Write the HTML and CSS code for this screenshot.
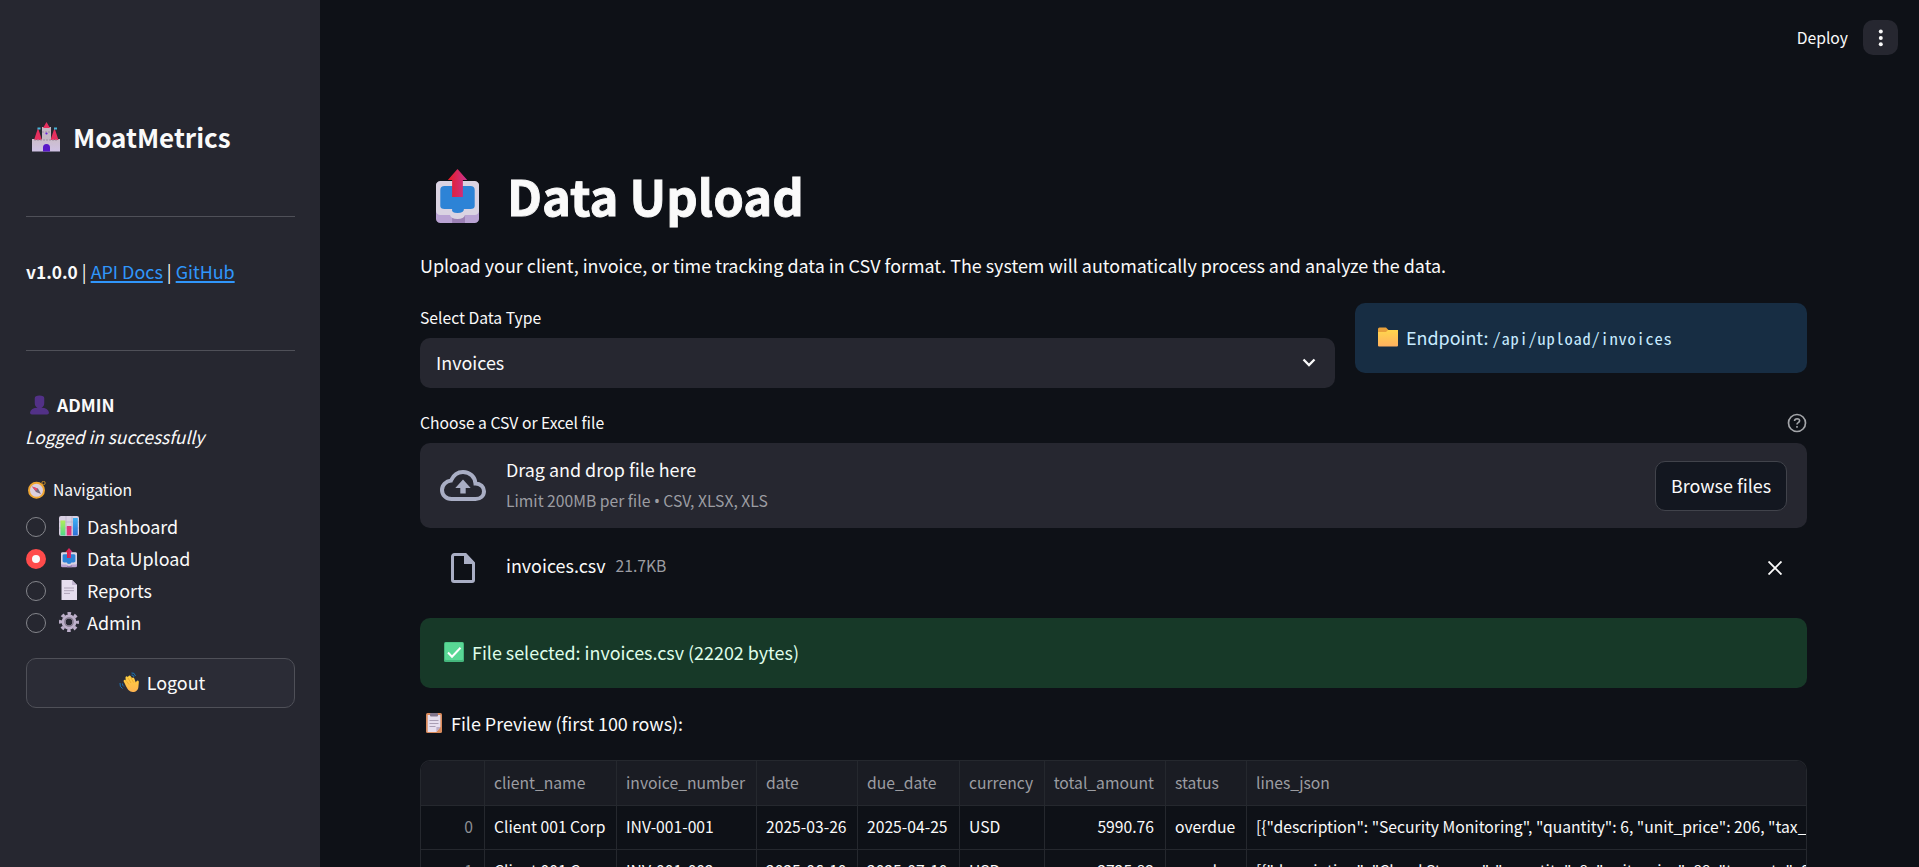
FILE: index.html
```html
<!DOCTYPE html>
<html lang="en">
<head>
<meta charset="utf-8">
<title>MoatMetrics</title>
<link rel="stylesheet" href="styles.css">
</head>
<body>
<svg class="defs" width="0" height="0" aria-hidden="true">
  <defs>
    <linearGradient id="arrow" x1="0" x2="1" y1="0" y2="0"><stop offset="0" stop-color="#e81c24"/><stop offset="1" stop-color="#c93391"/></linearGradient>
    <linearGradient id="lilac" x1="0" x2="0" y1="0" y2="1"><stop offset="0" stop-color="#cbbdc9"/><stop offset="1" stop-color="#cfc1e4"/></linearGradient>
    <linearGradient id="folder" x1="0" x2="0" y1="0" y2="1"><stop offset="0" stop-color="#ffd64d"/><stop offset="1" stop-color="#ffb160"/></linearGradient>
    <linearGradient id="hand" x1="0" x2="0" y1="0" y2="1"><stop offset="0" stop-color="#ffd23e"/><stop offset="1" stop-color="#fdb350"/></linearGradient>
    <linearGradient id="green" x1="0" x2="0" y1="0" y2="1"><stop offset="0" stop-color="#b2ee5a"/><stop offset="1" stop-color="#4fd88a"/></linearGradient>
    <linearGradient id="blue" x1="0" x2="0" y1="0" y2="1"><stop offset="0" stop-color="#3fb2f5"/><stop offset="1" stop-color="#2e6fd6"/></linearGradient>
    <symbol id="outbox" viewBox="0 0 40 54" preserveAspectRatio="none">
      <rect y="13" width="40" height="41" rx="4" fill="#b9a3d3"/>
      <path d="M15 46h12v8H15z" fill="#9b80b4"/>
      <path d="M4 12h32a4 4 0 0 1 4 4v26a4 4 0 0 1-4 4h-9q-1 4-7 4t-7-4H4a4 4 0 0 1-4-4V16a4 4 0 0 1 4-4z" fill="#dad3e2"/>
      <path d="M8 17h24q4 0 4 4v16q0 3-4 3h-6q0 4-6 4t-5-4H8q-4 0-4-3V21q0-4 4-4z" fill="#2d83d6"/>
      <path d="M20 0l9 11h-4v17H15V11h-4z" fill="url(#arrow)"/>
    </symbol>
  </defs>
</svg>
<div class="app">
  <aside class="sidebar">
    <h2 class="brand">
      <svg class="brand-icon" viewBox="0 0 28 30"><path d="M0 17h28v12.500H0z" fill="url(#lilac)"/><path d="M10 5h9v13h-9zM3 16h5v3H3zM20 16h5v3h-5z" fill="#c5b8c4"/><path d="M14.500 0l3.500 6h-7zM6 6l4 12H2zM22.500 6l4 12h-8z" fill="#e62f5e"/><path d="M5.500 5.500h3v2h-3zM22 5.500h3v2h-3z" fill="#45b5d8"/><path d="M10 10h9M2 18h24" stroke="#a08fa5" stroke-dasharray="2 1"/><circle cx="14.500" cy="11.500" r="1.100" fill="#6a1de0"/><path d="M11 29.500v-4a3.500 3.500 0 0 1 7 0v4z" fill="#5a18c8"/></svg>
      <span>MoatMetrics</span>
    </h2>
    <hr class="rule">
    <p class="version"><b>v1.0.0</b> | <a href="#">API Docs</a> | <a href="#">GitHub</a></p>
    <hr class="rule">
    <div class="user">
      <p class="user-name"><svg class="user-icon" viewBox="0 0 20 20"><path d="M5 3q0-3 5-3t5 3v5q0 4-3 5 7 0 8 5 0 2-2 2H2q-2 0-2-2 1-5 8-5-3-1-3-5z" fill="#523187"/></svg><b>ADMIN</b></p>
      <p class="user-status">Logged in successfully</p>
    </div>
    <p class="nav-title"><svg class="compass" viewBox="0 0 18 18"><circle cx="15.500" cy="2" r="1.700" fill="none" stroke="#c58a26"/><circle cx="8.500" cy="9.300" r="7.500" fill="#dcd0df" stroke="#efa633" stroke-width="2"/><path d="M4 5.500l6 2 3 5.500-5-2z" fill="#73687c"/><path d="M4 5.500l5.500 2-1.500 2.500z" fill="#ef476b"/></svg>Navigation</p>
    <nav class="nav">
      <label class="option"><i class="radio"></i><svg class="emoji" viewBox="0 0 20 20"><rect width="20" height="20" rx="2" fill="#d8cfe2"/><path d="M0 6h20M0 12h20M7 0v20M13 0v20" stroke="#b9acc6" stroke-width=".7"/><rect x="1.500" y="4.500" width="4.800" height="15" fill="url(#green)"/><rect x="7.800" y="10" width="4.600" height="9.500" fill="#e0357b"/><rect x="14" y="2" width="4.800" height="17.500" fill="url(#blue)"/></svg>Dashboard</label>
      <label class="option"><i class="radio radio-on"></i><svg class="emoji" viewBox="0 0 20 20"><use href="#outbox" x="2" y="0" width="16" height="19.500"/></svg>Data Upload</label>
      <label class="option"><i class="radio"></i><svg class="emoji" viewBox="0 0 20 20"><path d="M2.500 0H13l5 5v15H2.500z" fill="#e6ddee"/><path d="M13 0l5 5h-5z" fill="#c4b7d2"/><path d="M5 8h10M5 10.700h10M5 13.400h6" stroke="#afa3b8"/></svg>Reports</label>
      <label class="option"><i class="radio"></i><svg class="emoji" viewBox="0 0 20 20"><circle cx="10" cy="10" r="5.400" fill="none" stroke="#bdb0ca" stroke-width="4"/><circle cx="10" cy="10" r="8.500" fill="none" stroke="#bdb0ca" stroke-width="3" stroke-dasharray="3.500 3.176" stroke-dashoffset="1.750"/><circle cx="10" cy="10" r="4.200" fill="none" stroke="#80778a" stroke-width="1.200"/></svg>Admin</label>
    </nav>
    <button class="button logout"><svg class="emoji wave" viewBox="0 0 20 20"><path d="M12.500 1q3-.8 4 3M12.500 3q2-.3 2.500 2M1 11q-.5 4 2.500 5.500M3.400 11.500q0 2 1.500 3" fill="none" stroke="#1976b8" stroke-width="1"/><path d="M6 12L4.500 9q1-2 2.200-.5L6.500 5q1.300-1.500 2.400.2L9.500 4q1.500-1.300 2.500.7l1 1.300q1.500-1 2.300.6l1.500 4q1.200-2.800 2.500-1.800c1 .7.300 3 .2 5.200C19.400 18 17 20 13.800 20S8 17 6 12z" fill="url(#hand)"/><path d="M7 8.500l3 4M9 6l3 5M12 5.500l2.600 5" stroke="#e59a27" stroke-width=".6"/></svg>Logout</button>
  </aside>
  <main class="main">
    <header class="topbar">
      <span class="deploy">Deploy</span>
      <button class="menu"><svg width="20" height="20" viewBox="0 0 20 20" fill="#fafafa"><circle cx="9.800" cy="3.600" r="2"/><circle cx="9.800" cy="9.900" r="2"/><circle cx="9.800" cy="16.200" r="2"/></svg></button>
    </header>
    <div class="content">
      <h1 class="title"><svg class="title-icon" viewBox="0 0 43 54"><use href="#outbox" width="43" height="54"/></svg><span>Data Upload</span></h1>
      <p class="intro">Upload your client, invoice, or time tracking data in CSV format. The system will automatically process and analyze the data.</p>
      <div class="type-row">
        <div class="field">
          <div class="label">Select Data Type</div>
          <div class="select"><span>Invoices</span><svg class="chevron" viewBox="0 0 14 9"><path d="M1.500 1.500L7 7l5.500-5.500" fill="none" stroke="#fafafa" stroke-width="2.300"/></svg></div>
        </div>
        <div class="alert info"><svg class="emoji" viewBox="0 0 20 20"><path d="M0 2Q0 .5 1.500.5H8l2.500 2.500H20v7H0z" fill="#e9a13b"/><path d="M0 5h8l2-2h10v15.500q0 1-1 1H1q-1 0-1-1z" fill="url(#folder)"/></svg><span>Endpoint: <code>/api/upload/invoices</code></span></div>
      </div>
      <div class="upload">
        <div class="label upload-label"><span>Choose a CSV or Excel file</span><svg class="help" viewBox="0 0 20 20" fill="none" stroke="#a3a5a9"><circle cx="10" cy="10" r="8.500" stroke-width="1.700"/><path d="M7.500 8q.2-2.300 2.600-2.300 2.500.1 2.500 2.100 0 1.200-1.300 1.800-1.300.7-1.300 1.900M10 13v1.700" stroke-width="1.600"/></svg></div>
        <div class="dropzone">
          <svg class="cloud" viewBox="0 0 46 31"><path d="M11.500 29C6 29 2 25 2 20c0-5 4-9 9-9.500C13.500 5 18 2 23 2c7 0 12 5 12.500 11.500 5 0 8.500 3.500 8.500 7.700 0 4.500-3.500 7.800-8.500 7.800z" fill="none" stroke="#a9aec4" stroke-width="4"/><path d="M23 9.500l7.700 8.500h-5v5.500h-5.400V18h-5z" fill="#a9aec4"/></svg>
          <div class="drop-text"><div>Drag and drop file here</div><div class="hint">Limit 200MB per file <span class="bullet">•</span> CSV, XLSX, XLS</div></div>
          <button class="button browse">Browse files</button>
        </div>
        <div class="file">
          <svg class="file-icon" viewBox="0 0 24 30"><path d="M3.500 1.500h11L22.500 10v17a1.500 1.500 0 0 1-1.500 1.500H3a1.500 1.500 0 0 1-1.500-1.500V3.500a2 2 0 0 1 2-2z" fill="none" stroke="#a9aec4" stroke-width="3"/><path d="M13 1h2l8 8v2H13z" fill="#a9aec4"/></svg>
          <span class="file-name">invoices.csv</span><span class="hint file-size">21.7KB</span>
          <svg class="close" viewBox="0 0 14 14"><path d="M.5.5l13 13M13.500.5l-13 13" stroke="#fafafa" stroke-width="1.900"/></svg>
        </div>
      </div>
      <div class="alert success"><svg class="emoji" viewBox="0 0 20 20"><rect width="20" height="20" rx="1.500" fill="#45b77d"/><rect x="1" y=".5" width="18" height="17.500" rx="1" fill="#59d895"/><path d="M4 10.500l4 4.200 8.500-9" fill="none" stroke="#fff" stroke-width="2"/></svg><span>File selected: invoices.csv (22202 bytes)</span></div>
      <p class="preview"><svg class="clip" viewBox="0 0 16 20"><rect width="16" height="20" rx="1.500" fill="#d98b5c"/><path d="M1.700 2h12.700v12l-4 5H1.700z" fill="#e6deee"/><path d="M14.400 14l-4 5v-5z" fill="#bdaec9"/><rect x="4" width="8" height="3.500" rx="1" fill="#81768d"/><path d="M3.500 7.500h9M3.500 10.500h9M3.500 13.500h6" stroke="#a99eb4"/></svg>File Preview (first 100 rows):</p>
      <div class="grid">
        <div class="cell head"></div><div class="cell head">client_name</div><div class="cell head">invoice_number</div><div class="cell head">date</div><div class="cell head">due_date</div><div class="cell head">currency</div><div class="cell head num">total_amount</div><div class="cell head">status</div><div class="cell head">lines_json</div>
        <div class="cell num index">0</div><div class="cell">Client 001 Corp</div><div class="cell">INV-001-001</div><div class="cell">2025-03-26</div><div class="cell">2025-04-25</div><div class="cell">USD</div><div class="cell num">5990.76</div><div class="cell">overdue</div><div class="cell">[{"description": "Security Monitoring", "quantity": 6, "unit_price": 206, "tax_</div>
        <div class="cell num index">1</div><div class="cell">Client 001 Corp</div><div class="cell">INV-001-002</div><div class="cell">2025-06-10</div><div class="cell">2025-07-10</div><div class="cell">USD</div><div class="cell num">2725.83</div><div class="cell">overdue</div><div class="cell">[{"description": "Cloud Storage", "quantity": 8, "unit_price": 88, "tax_rate": 0.1}]</div>
      </div>
    </div>
  </main>
</div>
</body>
</html>
```
FILE: styles.css
```css
* { box-sizing: border-box; }
body {
  margin: 0;
  overflow: hidden;
  background: #0e1117;
  color: #fafafa;
  font: 17.920px/32px "Noto Sans CJK SC", "Noto Sans", sans-serif;
}
p, h1, h2 { margin: 0; }
svg { display: block; flex: none; }
.defs { position: absolute; }
.app { display: flex; width: 1919px; height: 867px; }

.sidebar { width: 320px; flex: none; padding: 112px 25px 0 26px; background: #262730; }
.brand { display: flex; align-items: center; gap: 13px; height: 50px; padding-left: 6px; font-size: 26px; line-height: 34px; font-weight: 700; }
.brand-icon { width: 28px; height: 30px; }
.rule { height: 1px; margin: 0; border: 0; background: #4f5058; }
.brand + .rule { margin-top: 54px; }
.version { margin-top: 38px; height: 95px; white-space: nowrap; }
.version b { font-size: 17.300px; }
.version a { color: #3096fb; text-decoration: underline 2px; text-underline-offset: 2px; }
.user { margin-top: 38px; }
.user-name { display: flex; align-items: center; gap: 8px; padding-left: 4px; font-size: 17.500px; }
.user-icon { width: 19px; height: 20px; }
.user-status { margin-left: -1px; font-size: 17.400px; font-style: italic; }
.nav-title { display: flex; align-items: center; gap: 7px; margin-top: 22px; padding-left: 2px; height: 30px; font-size: 15.700px; }
.compass { width: 18px; height: 18px; }
.nav { margin-top: 5px; }
.option { display: flex; align-items: center; height: 32px; }
.emoji { width: 20px; height: 20px; margin-right: 8px; }
.radio { width: 20px; height: 20px; margin: 2px 13px 0 0; border: 1.500px solid #84858b; border-radius: 50%; }
.radio-on { border: 6.500px solid #ff4b4b; background: #fafafa; }
.button { display: flex; align-items: center; justify-content: center; height: 50px; padding: 0 0 2px; border: 1px solid #4f5058; border-radius: 10px; background: #2b2c36; color: inherit; font: inherit; }
.logout { width: 100%; margin-top: 20px; padding-left: 3px; }

.main { flex: 1; min-width: 0; height: 867px; overflow: hidden; }
.topbar { display: flex; align-items: center; justify-content: flex-end; gap: 15px; height: 75px; padding-right: 21px; }
.deploy { font-size: 15.700px; }
.menu { display: flex; align-items: center; justify-content: center; width: 35px; height: 35px; padding: 0; border: 0; border-radius: 10px; background: #262730; }
.content { width: 1387px; margin-left: 100px; }
.title { display: flex; align-items: center; gap: 28px; height: 66px; margin: 88px 0 20px; padding-left: 16px; font-size: 49px; line-height: 66px; font-weight: 700; -webkit-text-stroke: .9px #fafafa; }
.title-icon { width: 43px; height: 54px; }
.title span { padding-bottom: 2px; }
.type-row { display: grid; grid-template-columns: 915px 452px; gap: 20px; align-items: start; margin-top: 22px; }
.label { display: flex; align-items: center; height: 30px; margin-bottom: 5px; font-size: 15.700px; }
.select { display: flex; align-items: center; justify-content: space-between; height: 50px; padding: 0 19px 2px 16px; border-radius: 10px; background: #262730; }
.chevron { width: 14px; height: 9px; }
.alert { display: flex; align-items: center; height: 70px; padding: 0 23px 2px; border-radius: 10px; }
.info { background: #172d43; color: #c7ebff; }
.info code { font: 16.500px/20px "Noto Sans Mono CJK SC", "Liberation Mono", monospace; letter-spacing: .75px; }
.upload { margin-top: 20px; }
.upload-label { justify-content: space-between; }
.help { width: 20px; height: 20px; }
.dropzone { display: flex; align-items: center; height: 85px; padding: 0 20px; border-radius: 10px; background: #262730; }
.cloud { width: 46px; height: 31px; }
.drop-text { flex: 1; margin-left: 20px; line-height: 31px; }
.hint { color: #9c9da2; font-size: 15.700px; }
.bullet { font-family: "Noto Sans", sans-serif; }
.browse { width: 132px; background: #131720; border-color: #41434b; }
.file { display: flex; align-items: center; height: 90px; padding: 0 25px 10px 31px; }
.file-icon { width: 24px; height: 30px; }
.file-name { margin: 0 10px 0 31px; padding-bottom: 7px; }
.file-size { padding-bottom: 5px; }
.close { width: 14px; height: 14px; margin-left: auto; }
.success { padding-left: 24px; background: #173928; color: #dffde9; }
.preview { display: flex; align-items: center; gap: 9px; height: 32px; margin-top: 19px; padding-left: 6px; }
.clip { width: 16px; height: 20px; }
.grid { display: grid; grid-template-columns: 64px 132px 140px 101px 102px 85px 121px 81px 1fr; margin-top: 21px; border: 1px solid #25282e; border-bottom: 0; border-radius: 10px 10px 0 0; overflow: hidden; font-size: 15.700px; line-height: 41px; }
.cell { height: 44px; padding: 0 9px; border-right: 1px solid #25282e; border-bottom: 1px solid #25282e; white-space: nowrap; overflow: hidden; }
.cell:nth-child(9n) { border-right: 0; padding-right: 0; }
.head { height: 45px; background: #1a1c23; color: #9c9da2; line-height: 43px; }
.num { text-align: right; padding-right: 11px; }
.head.num { padding-left: 0; }
.index { color: #8d8f94; }
```
